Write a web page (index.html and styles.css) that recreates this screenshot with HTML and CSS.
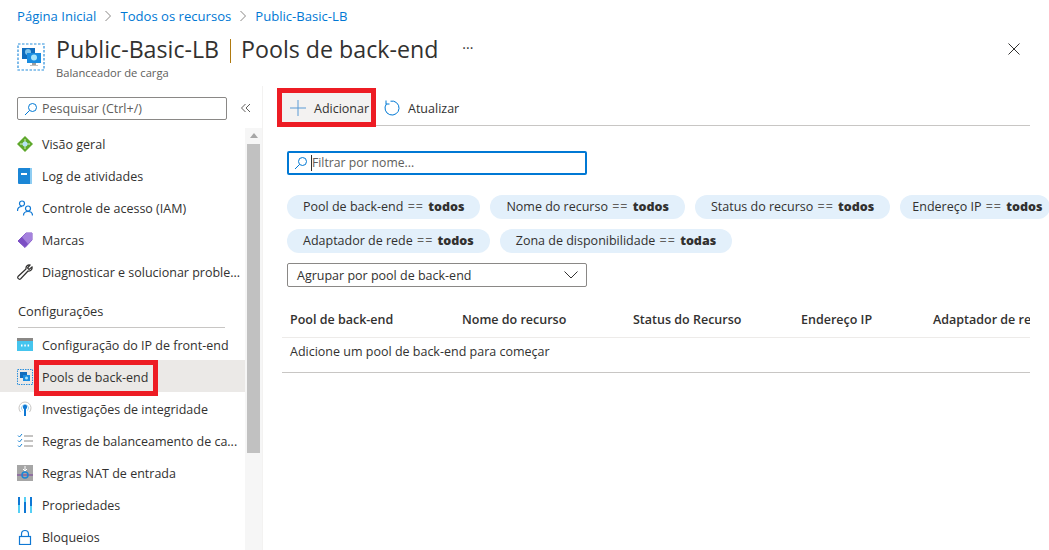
FILE: index.html
```html
<!DOCTYPE html>
<html lang="pt">
<head>
    <title>Public-Basic-LB | Pools de back-end</title>
    <link rel="stylesheet" href="styles.css">
</head>
<body>
<nav class="crumbs">
    <a>Página Inicial</a>
    <svg class="sep" viewBox="0 0 8 12"><path d="M1.5 1l5 5-5 5" fill="none" stroke="#8a8886"/></svg>
    <a>Todos os recursos</a>
    <svg class="sep" viewBox="0 0 8 12"><path d="M1.5 1l5 5-5 5" fill="none" stroke="#8a8886"/></svg>
    <a>Public-Basic-LB</a>
</nav>

<header class="title-bar">
    <svg class="res-icon" viewBox="0 0 28 28">
        <rect x="1" y="1" width="26" height="26" fill="none" stroke="#2b8fdc" stroke-dasharray="2.5 1.5" stroke-width="1.2"/>
        <rect x="5" y="5" width="13" height="11" fill="#0f6cbd"/>
        <circle cx="11" cy="9" r="3" fill="#7fc4ec"/>
        <rect x="10" y="10" width="14" height="10" fill="#1a8ce0"/>
        <circle cx="17" cy="14.500" r="3" fill="#a6e4fa"/>
        <rect x="15" y="20" width="4" height="2" fill="#a0a0a0"/>
        <rect x="13" y="22" width="8" height="1" fill="#c0c0c0"/>
    </svg>
    <div class="title-text">
        <h1>Public-Basic-LB <span class="bar"></span> Pools de back-end</h1>
        <div class="subtitle">Balanceador de carga</div>
    </div>
    <span class="more">···</span>
    <svg class="close" viewBox="0 0 12 12"><path d="M.5.5l11 11M11.5.5l-11 11" stroke="#323130" fill="none"/></svg>
</header>

<div class="blade">
    <aside class="side">
        <div class="side-top">
            <div class="search">
                <svg class="lens" viewBox="0 0 14 14"><circle cx="8.500" cy="5.500" r="4" fill="none" stroke="#0078d4"/><path d="M5.500 8.500L1 13" stroke="#0078d4" fill="none"/></svg>
                Pesquisar (Ctrl+/)
            </div>
            <svg class="collapse" viewBox="0 0 10 10"><path d="M4.500 1l-4 4 4 4M9 1L5 5l4 4" fill="none" stroke="#605e5c"/></svg>
        </div>
        <div class="menu-wrap">
            <ul class="menu">
                <li>
                    <svg viewBox="0 0 16 16"><path d="M8 0l8 8-8 8-8-8z" fill="#5ea82c"/><path d="M8 3v10M3 8h10" stroke="#d7eebd"/><circle cx="8" cy="8" r="2.500" fill="#b6e3f7"/></svg>
                    Visão geral
                </li>
                <li>
                    <svg viewBox="0 0 16 16"><rect x="1" y="0" width="14" height="16" rx="1" fill="#1b86d6"/><rect x="13" y="0" width="2" height="16" fill="#8fcdf2"/><rect x="4" y="5" width="6" height="2" fill="#fff"/></svg>
                    Log de atividades
                </li>
                <li>
                    <svg viewBox="0 0 16 16" fill="none" stroke="#0f78d4" stroke-width="1.200"><circle cx="5" cy="3.500" r="2.500"/><path d="M.5 11c0-3 1.500-4.500 4.500-4.500"/><circle cx="11" cy="8.500" r="2.500"/><path d="M6.500 15.500c0-3 1.500-4 4.500-4s4.500 1 4.500 4"/></svg>
                    Controle de acesso (IAM)
                </li>
                <li>
                    <svg viewBox="0 0 16 16"><path d="M9 1h6v7l-7 7.500L1 9z" fill="#7c4fc4" stroke="#7c4fc4" stroke-linejoin="round"/><path d="M9 1h6v7L11 12 5 5z" fill="#a582dd"/></svg>
                    Marcas
                </li>
                <li>
                    <svg viewBox="0 0 16 16"><path d="M15 3l-3 2.500L10.500 4l2.500-3c-2-.5-4.500 1-4 4L1 12.500c-1 1.500 1 3.500 2.500 2.500L11 7c3 .5 4.500-2 4-4z" fill="none" stroke="#323130" stroke-width="1.200"/></svg>
                    Diagnosticar e solucionar proble...
                </li>
                <li class="group">Configurações</li>
                <li>
                    <svg viewBox="0 0 16 16"><rect x="0" y="1" width="16" height="13" fill="#45c5ee"/><rect x="0" y="1" width="16" height="3" fill="#8a8886"/><path d="M4 8.500h1.500M7.300 8.500h1.500M10.600 8.500h1.500" stroke="#fff" stroke-width="2"/></svg>
                    Configuração do IP de front-end
                </li>
                <li class="active">
                    <svg viewBox="0 0 16 16">
                        <rect x=".5" y=".5" width="15" height="15" fill="none" stroke="#2b8fdc" stroke-dasharray="1.500 1"/>
                        <rect x="3" y="3" width="7" height="6" fill="#0f6cbd"/>
                        <rect x="6" y="6" width="7" height="6" fill="#1a8ce0"/>
                        <circle cx="9.500" cy="9" r="1.500" fill="#a6e4fa"/>
                    </svg>
                    Pools de back-end
                </li>
                <li>
                    <svg viewBox="0 0 16 16" fill="none"><path d="M3.500 11a6 6 0 1 1 9 0" stroke="#c8c6c4"/><path d="M5.500 9.500a3.500 3.500 0 1 1 5 0" stroke="#9fd3f2"/><path d="M8 7v8" stroke="#0f78d4" stroke-width="2"/><circle cx="8" cy="6" r="2.200" fill="#0f78d4"/></svg>
                    Investigações de integridade
                </li>
                <li>
                    <svg viewBox="0 0 16 16" fill="none"><path d="M7 3h9M7 8h9M7 13h9" stroke="#8a8886"/><path d="M1 2.500l1.500 1.500L5 1M1 7.500L2.500 9 5 6M1 12.500L2.500 14 5 11" stroke="#1b86d6"/></svg>
                    Regras de balanceamento de ca...
                </li>
                <li>
                    <svg viewBox="0 0 16 16"><rect width="16" height="16" fill="#a6a6a6"/><path d="M0 10h16" stroke="#7a3d9a"/><circle cx="8" cy="10" r="3" fill="none" stroke="#1b86d6" stroke-width="1.500"/><path d="M8 1v5M6 4l2 2 2-2" fill="none" stroke="#fff"/></svg>
                    Regras NAT de entrada
                </li>
                <li>
                    <svg viewBox="0 0 16 16"><path d="M2 0v16M8 0v16M14 0v16" stroke="#0f78d4" stroke-width="2"/><path d="M2 8v8M8 0v5M14 9v7" stroke="#55d0f5" stroke-width="2"/></svg>
                    Propriedades
                </li>
                <li>
                    <svg viewBox="0 0 16 16" fill="none" stroke="#0f78d4" stroke-width="1.200"><rect x="2.500" y="7.500" width="11" height="8"/><path d="M4.500 7.500V5a3.500 3.500 0 0 1 7 0v2.500"/></svg>
                    Bloqueios
                </li>
            </ul>
            <div class="scroll">
                <div class="scroll-up"></div>
                <div class="scroll-thumb"></div>
            </div>
        </div>
    </aside>

    <main class="content">
        <div class="toolbar">
            <button class="tool tool-add">
                <svg viewBox="0 0 16 16"><path d="M8 0v16M0 8h16" stroke="#5a9bd5" fill="none"/></svg>
                Adicionar
            </button>
            <button class="tool">
                <svg viewBox="0 0 16 16"><path d="M6.500 1.200A7 7 0 1 1 2.300 4M2 .5V4h3.500" fill="none" stroke="#0078d4"/></svg>
                Atualizar
            </button>
        </div>

        <div class="filter">
            <svg class="lens" viewBox="0 0 14 14"><circle cx="8.500" cy="5.500" r="4" fill="none" stroke="#0078d4"/><path d="M5.500 8.500L1 13" stroke="#0078d4" fill="none"/></svg>
            <span class="caret"></span>Filtrar por nome...
        </div>

        <div class="pills">
            <span class="pill">Pool de back-end <i>==</i> <b>todos</b></span>
            <span class="pill">Nome do recurso <i>==</i> <b>todos</b></span>
            <span class="pill">Status do recurso <i>==</i> <b>todos</b></span>
            <span class="pill pill-tight">Endereço IP <i>==</i> <b>todos</b></span>
            <span class="pill">Adaptador de rede <i>==</i> <b>todos</b></span>
            <span class="pill">Zona de disponibilidade <i>==</i> <b>todas</b></span>
        </div>

        <div class="dropdown">
            Agrupar por pool de back-end
            <svg viewBox="0 0 14 8"><path d="M.5.500L7 7 13.500.500" fill="none" stroke="#323130"/></svg>
        </div>

        <div class="table">
            <div class="thead">
                <span class="c1">Pool de back-end</span>
                <span class="c2">Nome do recurso</span>
                <span class="c3">Status do Recurso</span>
                <span class="c4">Endereço IP</span>
                <span class="c5">Adaptador de re</span>
            </div>
            <div class="empty">Adicione um pool de back-end para começar</div>
        </div>
    </main>
</div>
</body>
</html>
```

FILE: styles.css
```css
*, *::after {
    box-sizing: border-box;
}
body {
    margin: 0;
    height: 550px;
    overflow: hidden;
    font-family: "Open Sans", "Noto Sans", sans-serif;
    font-size: 12.5px;
    color: #323130;
    background: #fff;
}
.crumbs {
    display: flex;
    align-items: center;
    gap: 8px;
    height: 32px;
    padding-left: 17px;
    font-size: 13.100px;
    color: #0078d4;
}
.sep {
    width: 8px;
    height: 12px;
}
.title-bar {
    display: flex;
    height: 54px;
    padding: 1px 0 0 17px;
}
.res-icon {
    width: 28px;
    height: 28px;
    margin-top: 10px;
    margin-right: 11px;
}
h1 {
    margin: 0;
    font-size: 23.200px;
    font-weight: 400;
    line-height: 32px;
    white-space: nowrap;
}
.bar {
    display: inline-block;
    width: 1px;
    height: 24px;
    margin: 0 4px 0 5px;
    background: #b07a10;
    vertical-align: -5px;
}
.subtitle {
    font-size: 11.200px;
    line-height: 15px;
    color: #605e5c;
}
.more {
    margin: 5px 0 0 24px;
    font-size: 14px;
}
.close {
    width: 12px;
    height: 12px;
    margin: 10px 29px 0 auto;
}
.blade {
    display: flex;
    height: 464px;
}
.side {
    width: 262px;
    flex: none;
}
.side-top {
    display: flex;
    align-items: flex-start;
    height: 42px;
    padding: 11px 0 0 17px;
}
.search {
    display: flex;
    align-items: center;
    gap: 4px;
    width: 210px;
    height: 23px;
    padding-left: 6px;
    border: 1px solid #8a8886;
    border-radius: 2px;
    color: #605e5c;
}
.lens {
    width: 14px;
    height: 14px;
    flex: none;
}
.collapse {
    width: 10px;
    height: 10px;
    margin: 6px 0 0 14px;
}
.menu-wrap {
    display: flex;
    height: 422px;
    overflow: hidden;
}
.menu {
    width: 245px;
    margin: 0;
    padding: 0;
    list-style: none;
}
.menu li {
    display: flex;
    align-items: center;
    gap: 9px;
    height: 32px;
    padding-left: 17px;
    white-space: nowrap;
}
.menu svg {
    width: 16px;
    height: 16px;
    flex: none;
}
.menu .group {
    height: 40px;
    margin: 0 20px 0 18px;
    padding: 7px 0 0;
    border-bottom: 1px solid #c8c6c4;
    font-size: 12.800px;
}
.menu .group ~ li {
    padding-top: 2px;
}
.menu .active {
    position: relative;
    background: #ebe9e7;
}
.menu .active::after {
    content: "";
    position: absolute;
    left: 34px;
    top: 0;
    width: 124px;
    height: 36px;
    border: 5px solid #ed1c24;
}
.scroll {
    width: 17px;
    background: #f6f6f6;
}
.scroll-up {
    height: 16px;
    padding-top: 5px;
}
.scroll-up::before {
    content: "";
    display: block;
    width: 0;
    margin: 0 auto;
    border: 4px solid transparent;
    border-top: 0;
    border-bottom: 5px solid #a6a6a6;
}
.scroll-thumb {
    height: 309px;
    margin: 0 2px;
    background: #c1c1c1;
}
.content {
    flex: 1;
    min-width: 0;
    padding-right: 19px;
    overflow: hidden;
    border-left: 1px solid #f3f2f1;
}
.toolbar {
    display: flex;
    height: 40px;
    margin-left: 14px;
    border-bottom: 1px solid #c8c6c4;
}
.tool {
    display: flex;
    align-items: center;
    gap: 8px;
    height: 39px;
    margin-top: 2px;
    padding: 1px 6px 0;
    border: 0;
    background: none;
    font: inherit;
    color: inherit;
}
.tool svg {
    width: 16px;
    height: 16px;
}
.tool-add {
    width: 99px;
    margin-right: 2px;
    padding-left: 13px;
    padding-right: 0;
    background: #f3f2f1;
    outline: 5px solid #ed1c24;
    outline-offset: -5px;
}
.filter {
    display: flex;
    align-items: center;
    width: 300px;
    height: 24px;
    margin: 25px 0 0 24px;
    padding: 0 0 1px 5px;
    border: 2px solid #0078d4;
    border-radius: 2px;
    font-size: 12.200px;
    color: #605e5c;
}
.caret {
    width: 1px;
    height: 16px;
    margin-left: 3px;
    background: #323130;
}
.pills {
    display: flex;
    flex-wrap: wrap;
    gap: 10px;
    width: 770px;
    margin: 20px 0 0 24px;
}
.pill {
    height: 24px;
    padding: 0 16px;
    border-radius: 12px;
    background: #e3f0fb;
    line-height: 24px;
    white-space: nowrap;
}
.pill-tight {
    padding: 0 8px 0 12px;
}
.pill i {
    margin: 0 1px;
    font-style: normal;
    letter-spacing: 1px;
    color: #605e5c;
}
.pill b {
    font-weight: 800;
}
.dropdown {
    display: flex;
    align-items: center;
    justify-content: space-between;
    width: 300px;
    height: 24px;
    margin: 10px 0 0 24px;
    padding: 0 8px 0 9px;
    border: 1px solid #8a8886;
    border-radius: 2px;
}
.dropdown svg {
    width: 14px;
    height: 8px;
}
.table {
    margin: 14px 0 0 19px;
    border-bottom: 1px solid #c8c6c4;
}
.thead {
    display: flex;
    height: 37px;
    align-items: center;
    border-bottom: 1px solid #edebe9;
    white-space: nowrap;
    overflow: hidden;
}
.thead span {
    flex: none;
    font-weight: 600;
}
.c1 { width: 180px; padding-left: 8px; }
.c2 { width: 171px; }
.c3 { width: 168px; }
.c4 { width: 132px; }
.c5 { width: 97px; }
.empty {
    height: 34px;
    padding-left: 8px;
    line-height: 28px;
}
```
